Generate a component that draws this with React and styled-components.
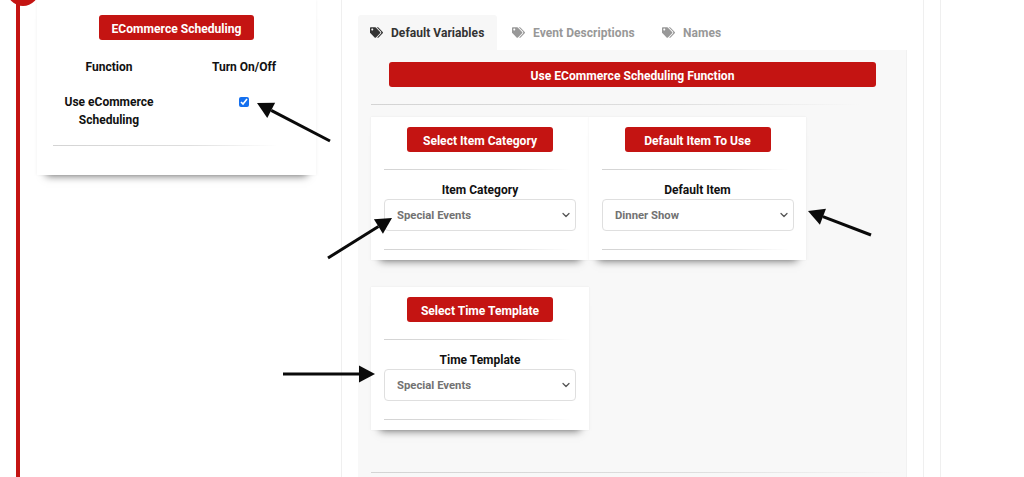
import React from "react";
import styled, { createGlobalStyle } from "styled-components";
import { FaTags } from "react-icons/fa";
import { ChevronDown } from "lucide-react";

const Global = createGlobalStyle`
  html, body { margin: 0; padding: 0; background: #fff; }
  body { font-family: Roboto, "Liberation Sans", sans-serif; overflow: hidden; }
  * { box-sizing: border-box; }
`;

const RED = "#c41412";

const Page = styled.div`
  position: relative;
  display: flex;
  align-items: flex-start;
  width: 1024px;
  height: 477px;
  overflow: hidden;
`;
const Rail = styled.div`
  position: relative;
  flex: none;
  width: 37px;
  height: 477px;
  padding-left: 16px;
`;
const RailLine = styled.div`
  width: 4px;
  height: 100%;
  background: ${RED};
`;
const RailDot = styled.div`
  position: absolute;
  left: 7px;
  top: -26px;
  width: 32px;
  height: 32px;
  border-radius: 50%;
  background: ${RED};
`;
const SideCard = styled.section`
  flex: none;
  width: 279px;
  height: 175px;
  padding: 15px 16px 0;
  background: #fff;
  display: flex;
  flex-direction: column;
  align-items: flex-start;
  box-shadow: 0 0 3px rgba(0, 0, 0, 0.06), 0 10px 8px -9px rgba(0, 0, 0, 0.55);
`;
const RedButton = styled.button`
  display: block;
  flex: none;
  width: ${(p) => p.$w}px;
  height: 25px;
  margin: ${(p) => p.$m || "0 auto"};
  border: 0;
  border-radius: 3px;
  background: ${RED};
  color: #fff;
  font: 700 12.1px/14px Roboto, sans-serif;
  text-align: center;
  padding: 2px 0 0;
`;
const FnGrid = styled.div`
  display: grid;
  grid-template-columns: 112px 108px;
  column-gap: 25px;
  margin-top: 18px;
  font-size: 12px;
  font-weight: 700;
  color: #111;
  text-align: center;
  line-height: 18px;
  row-gap: 17px;
`;
const CheckCell = styled.div`
  display: flex;
  justify-content: center;
  padding-top: 4px;
`;
const Check = styled.input`
  width: 10px;
  height: 10px;
  margin: 0;
  accent-color: #1570ef;
`;
const Divider = styled.hr`
  flex: none;
  border: 0;
  height: 1px;
  width: ${(p) => p.$w}px;
  margin: ${(p) => p.$m};
  background: linear-gradient(90deg, #d4d4d4 0%, #dedede 60%, rgba(222, 222, 222, 0) 100%);
`;
const Main = styled.main`
  flex: none;
  width: 583px;
  height: 477px;
  margin-left: 25px;
  padding: 15px 16px 0;
  border-left: 1px solid #efefef;
  border-right: 1px solid #efefef;
`;
const Tabs = styled.nav`
  display: flex;
  height: 35px;
`;
const Tab = styled.div`
  display: flex;
  align-items: center;
  gap: 8px;
  flex: none;
  width: ${(p) => p.$w}px;
  height: 35px;
  padding-left: ${(p) => p.$pl}px;
  border-radius: 3px 3px 0 0;
  background: ${(p) => (p.$active ? "#f7f7f7" : "transparent")};
  color: ${(p) => (p.$active ? "#333" : "#989898")};
  font-size: 12px;
  font-weight: 700;
  letter-spacing: 0.05px;
  svg { width: 13px; height: 13px; flex: none; }
`;
const TabPanel = styled.div`
  width: 549px;
  height: 440px;
  padding: 12px 13px 0;
  background: #f8f8f8;
  border-right: 1px solid #f1f1f1;
`;
const CardGrid = styled.div`
  display: grid;
  grid-template-columns: 218px 217px;
  row-gap: 27px;
  margin-top: 12px;
  align-items: start;
`;
const Card = styled.section`
  height: 143px;
  padding: 10px 13px 0;
  background: #fff;
  display: flex;
  flex-direction: column;
  box-shadow: 0 0 2px rgba(0, 0, 0, 0.07), 0 10px 8px -9px rgba(0, 0, 0, 0.55);
`;
const FieldLabel = styled.label`
  flex: none;
  height: 14px;
  margin-top: 13px;
  margin-bottom: 2px;
  font-size: 12px;
  line-height: 14px;
  font-weight: 700;
  color: #111;
  text-align: center;
`;
const SelectWrap = styled.div`
  position: relative;
  flex: none;
  width: 192px;
  height: 32px;
  svg {
    position: absolute;
    right: 4px;
    top: 10px;
    width: 12px;
    height: 12px;
    color: #555;
    pointer-events: none;
  }
`;
const Select = styled.select`
  appearance: none;
  display: block;
  width: 100%;
  height: 100%;
  padding: 0 12px;
  border: 1px solid #dfdfdf;
  border-radius: 4px;
  background: #fff;
  color: #727272;
  font: 700 11.3px Roboto, sans-serif;
`;
const OverlayLayer = styled.svg`
  position: absolute;
  left: 0;
  top: 0;
  width: 1024px;
  height: 477px;
  pointer-events: none;
`;

function Arrow({ tail, tip }) {
  const [x1, y1] = tail;
  const [x2, y2] = tip;
  const len = Math.hypot(x2 - x1, y2 - y1);
  const ux = (x2 - x1) / len;
  const uy = (y2 - y1) / len;
  const bx = x2 - ux * 16;
  const by = y2 - uy * 16;
  const a = `${bx - uy * 8.5},${by + ux * 8.5}`;
  const b = `${bx + uy * 8.5},${by - ux * 8.5}`;
  return (
    <g>
      <line x1={x1} y1={y1} x2={bx} y2={by} stroke="#0a0a0a" strokeWidth="3" />
      <polygon points={`${x2},${y2} ${a} ${b}`} fill="#0a0a0a" />
    </g>
  );
}

function Field({ button, label, value }) {
  return (
    <Card>
      <RedButton $w={146}>{button}</RedButton>
      <Divider $w={188} $m="17px 0 0" />
      <FieldLabel>{label}</FieldLabel>
      <SelectWrap>
        <Select defaultValue={value}>
          <option>{value}</option>
        </Select>
        <ChevronDown strokeWidth={2.5} />
      </SelectWrap>
      <Divider $w={188} $m="18px 0 0" />
    </Card>
  );
}

export default function App() {
  return (
    <Page>
      <Global />
      <Rail>
        <RailDot />
        <RailLine />
      </Rail>
      <SideCard>
        <RedButton $w={155}>ECommerce Scheduling</RedButton>
        <FnGrid>
          <div>Function</div>
          <div>Turn On/Off</div>
          <div>Use eCommerce Scheduling</div>
          <CheckCell>
            <Check type="checkbox" defaultChecked />
          </CheckCell>
        </FnGrid>
        <Divider $w={225} $m="16px 0 0" />
      </SideCard>
      <Main>
        <Tabs>
          <Tab $active $w={139} $pl={12}>
            <FaTags />
            Default Variables
          </Tab>
          <Tab $w={150} $pl={15}>
            <FaTags />
            Event Descriptions
          </Tab>
          <Tab $w={100} $pl={15}>
            <FaTags />
            Names
          </Tab>
        </Tabs>
        <TabPanel>
          <RedButton $w={487} $m="0 0 0 18px">
            Use ECommerce Scheduling Function
          </RedButton>
          <Divider $w={490} $m="17px 0 0" />
          <CardGrid>
            <Field button="Select Item Category" label="Item Category" value="Special Events" />
            <Field button="Default Item To Use" label="Default Item" value="Dinner Show" />
            <Field button="Select Time Template" label="Time Template" value="Special Events" />
          </CardGrid>
          <Divider $w={536} $m="42px 0 0" />
        </TabPanel>
      </Main>
      <OverlayLayer viewBox="0 0 1024 477">
        <line x1="940.5" y1="0" x2="940.5" y2="477" stroke="#efefef" />
        <Arrow tail={[330, 141]} tip={[257, 103]} />
        <Arrow tail={[328, 258]} tip={[392, 218]} />
        <Arrow tail={[871, 235]} tip={[808, 211]} />
        <Arrow tail={[283, 374]} tip={[375, 374]} />
      </OverlayLayer>
    </Page>
  );
}
